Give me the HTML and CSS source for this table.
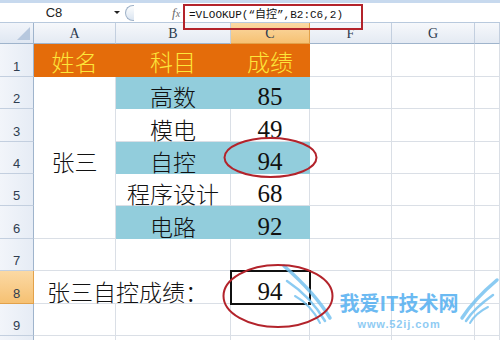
FILE: index.html
```html
<!DOCTYPE html>
<html lang="zh">
<head>
<meta charset="utf-8">
<title>VLOOKUP</title>
<link rel="stylesheet" href="styles.css">
</head>
<body>
<div class="app">
  <div class="formula-bar">
    <div class="namebox">C8</div>
    <div class="dd"></div>
    <div class="knob"></div>
    <div class="fx">f<span>x</span></div>
    <div class="formula">=VLOOKUP(“自控”,B2:C6,2)</div>
    <div class="formula-rest"></div>
  </div>
  <div class="sheet">
    <div class="corner"><span class="tri"></span></div>
    <div class="colh">A</div>
    <div class="colh">B</div>
    <div class="colh sel">C</div>
    <div class="colh">F</div>
    <div class="colh">G</div>
    <div class="colh"></div>

    <div class="rowh">1</div>
    <div class="cell orange">姓名</div>
    <div class="cell orange">科目</div>
    <div class="cell orange">成绩</div>
    <div class="cell"></div><div class="cell"></div><div class="cell"></div>

    <div class="rowh">2</div>
    <div class="cell merged-a">张三</div>
    <div class="cell blue">高数</div>
    <div class="cell blue num">85</div>
    <div class="cell"></div><div class="cell"></div><div class="cell"></div>

    <div class="rowh">3</div>
    <div class="cell">模电</div>
    <div class="cell num">49</div>
    <div class="cell"></div><div class="cell"></div><div class="cell"></div>

    <div class="rowh">4</div>
    <div class="cell blue">自控</div>
    <div class="cell blue num">94</div>
    <div class="cell"></div><div class="cell"></div><div class="cell"></div>

    <div class="rowh">5</div>
    <div class="cell">程序设计</div>
    <div class="cell num">68</div>
    <div class="cell"></div><div class="cell"></div><div class="cell"></div>

    <div class="rowh">6</div>
    <div class="cell blue">电路</div>
    <div class="cell blue num">92</div>
    <div class="cell"></div><div class="cell"></div><div class="cell"></div>

    <div class="rowh">7</div>
    <div class="cell"></div><div class="cell"></div><div class="cell"></div>
    <div class="cell"></div><div class="cell"></div><div class="cell"></div>

    <div class="rowh sel">8</div>
    <div class="cell label">张三自控成绩：</div>
    <div class="cell num active">94<span class="handle"></span></div>
    <div class="cell"></div><div class="cell"></div><div class="cell"></div>

    <div class="rowh">9</div>
    <div class="cell"></div><div class="cell"></div><div class="cell"></div>
    <div class="cell"></div><div class="cell"></div><div class="cell"></div>

    <div class="rowh"></div>
    <div class="cell"></div><div class="cell"></div><div class="cell"></div>
    <div class="cell"></div><div class="cell"></div><div class="cell"></div>
  </div>

  <div class="redbox"></div>
  <svg class="marks" width="500" height="340" viewBox="0 0 500 340">
    <g fill="none" stroke="#6fbff0" stroke-linecap="round" opacity="0.8">
      <path d="M284 266 C300 280 318 298 330 318" stroke-width="3.5"/>
      <path d="M287 281 C302 291 315 304 325 321" stroke-width="2.5"/>
      <path d="M295 296 C306 302 314 311 320 323" stroke-width="2"/>
      <path d="M497 280 C484 291 471 304 462 318" stroke-width="3.5"/>
      <path d="M493 295 C483 302 473 310 466 321" stroke-width="2.5"/>
      <path d="M488 307 C480 311 474 316 470 323" stroke-width="2"/>
    </g>
    <ellipse cx="270.5" cy="157.5" rx="46" ry="19.5" fill="none" stroke="#b3232b" stroke-width="2"/>
    <ellipse cx="278" cy="296" rx="54.5" ry="31" fill="none" stroke="#b3232b" stroke-width="2"/>
  </svg>
  <div class="wm">
    <div class="wm-title">我爱IT技术网</div>
    <div class="wm-url">www.52ij.com</div>
  </div>
</div>
</body>
</html>
```

FILE: styles.css
```css
* { box-sizing: border-box; }
html, body { margin: 0; padding: 0; background: #fff; }
.app {
  position: relative;
  width: 500px;
  height: 340px;
  overflow: hidden;
  font-family: "Liberation Sans", Arial, sans-serif;
}

.formula-bar {
  height: 23px;
  display: flex;
  align-items: center;
  border-top: 3px solid #c7d9ee;
  border-bottom: 1px solid #b8c9dd;
  background: #fff;
}
.namebox {
  width: 112px;
  text-align: center;
  font-size: 13px;
  color: #222;
  padding-right: 4px;
}
.dd {
  width: 0; height: 0;
  border-left: 3px solid transparent;
  border-right: 3px solid transparent;
  border-top: 3px solid #222;
  margin-left: 2px;
}
.knob {
  width: 9px;
  height: 16px;
  margin-left: 5px;
  border: 1px solid #9fb2c8;
  border-right: none;
  border-radius: 9px 0 0 9px;
  background: linear-gradient(#fdfefe, #dbe5f1);
}
.fx {
  margin-left: 38px;
  font-family: "Liberation Serif", serif;
  font-style: italic;
  font-size: 13px;
  color: #6b6b6b;
  width: 14px;
}
.fx span { font-size: 10px; }
.formula {
  margin-left: 3px;
  font-family: "Liberation Mono", "Noto Sans CJK SC", monospace;
  font-size: 11px;
  color: #111;
  white-space: nowrap;
}

.sheet {
  display: grid;
  grid-template-columns: 34px 82px 115px 79px 82px 83px 25px;
  grid-template-rows: 21px 33px 32px 33px 32px 32px 33px 32px 33px 32px 10px;
}
.corner {
  background: linear-gradient(#f2f5fa, #dfe7f2);
  border-right: 1px solid #9fb4cc;
  border-bottom: 1px solid #9fb4cc;
  position: relative;
}
.tri {
  position: absolute;
  right: 3px;
  bottom: 3px;
  width: 0; height: 0;
  border-left: 13px solid transparent;
  border-bottom: 13px solid #b7c8de;
}
.colh {
  background: linear-gradient(#f6f8fb, #e4eaf3);
  border-right: 1px solid #c3cfdf;
  border-bottom: 1px solid #9fb4cc;
  font-family: "Liberation Serif", serif;
  font-size: 14px;
  color: #2b3a4e;
  display: flex;
  align-items: center;
  justify-content: center;
  padding-top: 2px;
}
.colh.sel, .rowh.sel {
  background: linear-gradient(#fbd9a4, #f6c173);
  border-color: #e2a14a;
}
.rowh {
  background: linear-gradient(90deg, #f2f5fa, #e6ecf5);
  border-right: 1px solid #9fb4cc;
  border-bottom: 1px solid #c3cfdf;
  font-size: 13px;
  color: #2f3d50;
  display: flex;
  align-items: flex-end;
  justify-content: center;
  padding-bottom: 2px;
}
.cell {
  border-right: 1px solid #dadfe6;
  border-bottom: 1px solid #dadfe6;
  display: flex;
  align-items: flex-end;
  justify-content: center;
  padding-bottom: 0;
  font-family: "Noto Sans CJK SC", sans-serif;
  font-weight: 300;
  font-size: 23px;
  line-height: 23px;
  color: #111;
  white-space: nowrap;
}
.cell.num {
  font-family: "Liberation Serif", serif;
  font-weight: 400;
  font-size: 25px;
}
.orange {
  background: #e46c0a;
  border-color: #e46c0a;
  color: #fde63a;
  padding-bottom: 3px;
}
.blue {
  background: #92cddc;
  border-color: #92cddc;
}
.merged-a {
  grid-row: span 5;
  align-items: center;
  padding-top: 8px;
}
.label {
  grid-column: span 2;
  justify-content: flex-start;
  padding-left: 13px;
}
.active {
  position: relative;
  outline: 2px solid #111;
  outline-offset: -1px;
}
.handle {
  position: absolute;
  right: -3px;
  bottom: -3px;
  width: 5px;
  height: 5px;
  background: #111;
  border: 1px solid #fff;
}

.redbox {
  position: absolute;
  left: 183px;
  top: 4px;
  width: 180px;
  height: 26px;
  border: 2px solid #b3232b;
}
.marks {
  position: absolute;
  left: 0;
  top: 0;
}
.wm {
  position: absolute;
  left: 334px;
  top: 292px;
  width: 130px;
  text-align: center;
  color: #52aef0;
  opacity: 0.85;
}
.wm-title {
  font-family: "Noto Sans CJK SC", sans-serif;
  font-weight: 700;
  font-size: 20px;
  line-height: 22px;
}
.wm-url {
  margin-top: 4px;
  font-family: "Liberation Sans", sans-serif;
  font-weight: 700;
  font-size: 11px;
  line-height: 12px;
  letter-spacing: 0.9px;
  color: #7cc3f2;
}
```
